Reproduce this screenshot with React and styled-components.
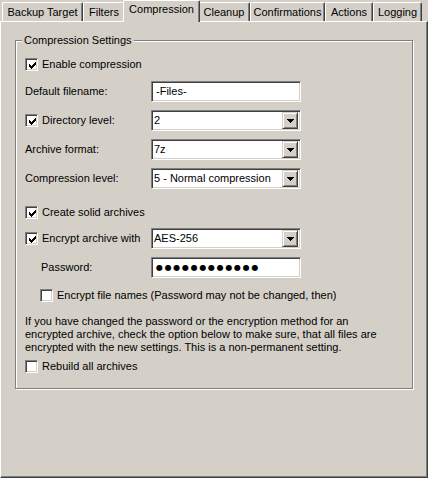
import React from 'react';
import styled, { createGlobalStyle } from 'styled-components';

const GlobalStyle = createGlobalStyle`
  html, body { margin: 0; padding: 0; background: #d4d0c8; }
  body { font-family: "Liberation Sans", Arial, sans-serif; font-size: 11px; color: #000; }
  * { box-sizing: border-box; }
`;

const Window = styled.div`
  width: 428px;
  height: 478px;
  display: flex;
  flex-direction: column;
  background: #d4d0c8;
`;

const TabStrip = styled.div`
  display: flex;
  align-items: flex-end;
  height: 21px;
  padding-left: 2px;
`;

const Tab = styled.div`
  position: relative;
  z-index: ${p => (p.$active ? 2 : 1)};
  width: ${p => (p.$active ? p.$w + 4 : p.$w)}px;
  height: ${p => (p.$active ? 22 : 19)}px;
  margin: ${p => (p.$active ? '0 -2px -1px -2px' : '0')};
  padding-top: ${p => (p.$active ? 2 : 3)}px;
  background: #d4d0c8;
  border-top: 1px solid #fff;
  border-left: 1px solid #fff;
  border-right: 1px solid #404040;
  border-radius: 2px 2px 0 0;
  box-shadow: inset -1px 0 0 #808080;
  text-align: center;
  line-height: 13px;
  white-space: nowrap;
`;

const Panel = styled.div`
  flex: 1;
  border: 1px solid;
  border-color: #fff #404040 #404040 #fff;
  box-shadow: inset -1px -1px 0 #808080;
  padding: 12px 14px 0 14px;
`;

const Group = styled.fieldset`
  margin: 0;
  padding: 0;
  border: 1px solid #808080;
  box-shadow: 1px 1px 0 #fff, inset 1px 1px 0 #fff;
`;

const Legend = styled.legend`
  margin-left: 6px;
  padding: 0 2px;
  line-height: 13px;
  background: #d4d0c8;
`;

const Content = styled.div`
  padding: 7px 9px 11px 9px;
  display: flex;
  flex-direction: column;
`;

const Row = styled.div`
  display: flex;
  align-items: center;
  height: ${p => p.$h || 21}px;
  margin-top: ${p => p.$mt || 0}px;
  padding-left: ${p => p.$indent || 0}px;
`;

const Label = styled.span`
  width: ${p => p.$w || 126}px;
  flex: none;
  line-height: 13px;
  white-space: nowrap;
`;

const CheckLabel = styled.label`
  display: flex;
  align-items: center;
  gap: 4px;
  width: ${p => (p.$w ? `${p.$w}px` : 'auto')};
  flex: none;
  white-space: nowrap;
  line-height: 13px;
`;

const Box = styled.span`
  width: 13px;
  height: 13px;
  flex: none;
  background: #fff;
  border: 1px solid;
  border-color: #808080 #fff #fff #808080;
  box-shadow: inset 1px 1px 0 #404040, inset -1px -1px 0 #d4d0c8;
  display: flex;
  align-items: center;
  justify-content: center;
`;

const Sunken = styled.div`
  width: 150px;
  height: 21px;
  background: #fff;
  border: 1px solid;
  border-color: #808080 #fff #fff #808080;
  box-shadow: inset 1px 1px 0 #404040, inset -1px -1px 0 #d4d0c8;
  display: flex;
  align-items: center;
  padding: 2px 2px 2px ${p => (p.$pad != null ? p.$pad : 4)}px;
  line-height: 13px;
  white-space: nowrap;
  overflow: hidden;
`;

const ComboText = styled.span`
  flex: 1;
  overflow: hidden;
`;

const DropButton = styled.span`
  width: 16px;
  height: 17px;
  flex: none;
  background: #d4d0c8;
  border: 1px solid;
  border-color: #d4d0c8 #404040 #404040 #d4d0c8;
  box-shadow: inset 1px 1px 0 #fff, inset -1px -1px 0 #808080;
  display: flex;
  align-items: center;
  justify-content: center;
`;

const Dots = styled.span`
  font-family: "DejaVu Sans", sans-serif;
  font-size: 8px;
  letter-spacing: 1.7px;
`;

const Paragraph = styled.p`
  margin: ${p => p.$mt || 0}px 0 0 0;
  line-height: 13px;
  white-space: nowrap;
`;

const Check = () => (
  <svg width="7" height="7" viewBox="0 0 7 7" shapeRendering="crispEdges" style={{ marginLeft: 1, marginTop: 1 }}>
    <path d="M6 0h1v3h-1zM5 1h1v3h-1zM4 2h1v3h-1zM3 3h1v3h-1zM2 4h1v3h-1zM1 3h1v3h-1zM0 2h1v3h-1z" fill="#000" />
  </svg>
);

const Arrow = () => (
  <svg width="7" height="4" viewBox="0 0 7 4" shapeRendering="crispEdges">
    <path d="M0 0h7v1h-1v1h-1v1h-1v1h-1v-1h-1v-1h-1v-1h-1z" fill="#000" />
  </svg>
);

const Checkbox = ({ checked, children, w }) => (
  <CheckLabel $w={w}>
    <Box>{checked && <Check />}</Box>
    <span>{children}</span>
  </CheckLabel>
);

const Combo = ({ value }) => (
  <Sunken $pad={2}>
    <ComboText>{value}</ComboText>
    <DropButton>
      <Arrow />
    </DropButton>
  </Sunken>
);

const tabs = [
  { label: 'Backup Target', w: 81 },
  { label: 'Filters', w: 42 },
  { label: 'Compression', w: 73, active: true },
  { label: 'Cleanup', w: 52 },
  { label: 'Confirmations', w: 75 },
  { label: 'Actions', w: 48 },
  { label: 'Logging', w: 49 },
];

export default function App() {
  return (
    <>
      <GlobalStyle />
      <Window>
        <TabStrip>
          {tabs.map(t => (
            <Tab key={t.label} $w={t.w} $active={t.active}>
              {t.label}
            </Tab>
          ))}
        </TabStrip>
        <Panel>
          <Group>
            <Legend>Compression Settings</Legend>
            <Content>
              <Row>
                <Checkbox checked>Enable compression</Checkbox>
              </Row>
              <Row $mt={6}>
                <Label>Default filename:</Label>
                <Sunken>-Files-</Sunken>
              </Row>
              <Row $mt={8}>
                <Checkbox checked w={126}>Directory level:</Checkbox>
                <Combo value="2" />
              </Row>
              <Row $mt={8}>
                <Label>Archive format:</Label>
                <Combo value="7z" />
              </Row>
              <Row $mt={8}>
                <Label>Compression level:</Label>
                <Combo value="5 - Normal compression" />
              </Row>
              <Row $mt={13}>
                <Checkbox checked>Create solid archives</Checkbox>
              </Row>
              <Row $mt={5}>
                <Checkbox checked w={126}>Encrypt archive with</Checkbox>
                <Combo value="AES-256" />
              </Row>
              <Row $mt={8} $indent={16}>
                <Label $w={110}>Password:</Label>
                <Sunken>
                  <Dots>●●●●●●●●●●●●</Dots>
                </Sunken>
              </Row>
              <Row $mt={7} $indent={15}>
                <Checkbox>Encrypt file names (Password may not be changed, then)</Checkbox>
              </Row>
              <Paragraph $mt={9}>
                If you have changed the password or the encryption method for an
                <br />
                encrypted archive, check the option below to make sure, that all files are
                <br />
                encrypted with the new settings. This is a non-permanent setting.
              </Paragraph>
              <Row $mt={2}>
                <Checkbox>Rebuild all archives</Checkbox>
              </Row>
            </Content>
          </Group>
        </Panel>
      </Window>
    </>
  );
}
